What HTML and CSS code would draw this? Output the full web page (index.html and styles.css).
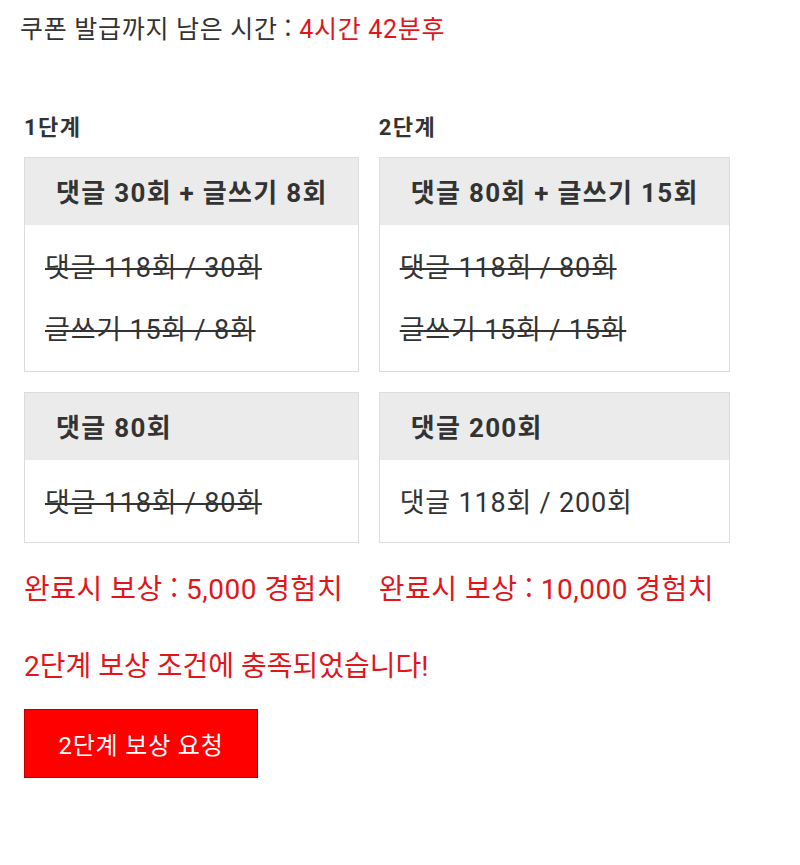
FILE: index.html
```html
<!DOCTYPE html>
<html lang="ko">
<head>
<meta charset="utf-8">
<link rel="stylesheet" href="styles.css">
</head>
<body>
<div class="page">
  <p class="timer">쿠폰 발급까지 남은 시간 <span class="colon">:</span> <span class="red">4시간 42분후</span></p>
  <div class="stages">
    <div class="stage">
      <h3 class="stage-title">1단계</h3>
      <div class="card">
        <div class="card-head">댓글 30회 + 글쓰기 8회</div>
        <div class="card-body">
          <p class="line done">댓글 118회 / 30회</p>
          <p class="line done">글쓰기 15회 / 8회</p>
        </div>
      </div>
      <div class="card">
        <div class="card-head">댓글 80회</div>
        <div class="card-body">
          <p class="line done">댓글 118회 / 80회</p>
        </div>
      </div>
      <p class="reward">완료시 보상 <span class="colon">:</span> 5,000 경험치</p>
    </div>
    <div class="stage">
      <h3 class="stage-title">2단계</h3>
      <div class="card">
        <div class="card-head">댓글 80회 + 글쓰기 15회</div>
        <div class="card-body">
          <p class="line done">댓글 118회 / 80회</p>
          <p class="line done">글쓰기 15회 / 15회</p>
        </div>
      </div>
      <div class="card">
        <div class="card-head">댓글 200회</div>
        <div class="card-body">
          <p class="line">댓글 118회 / 200회</p>
        </div>
      </div>
      <p class="reward">완료시 보상 <span class="colon">:</span> 10,000 경험치</p>
    </div>
  </div>
  <p class="notice">2단계 보상 조건에 충족되었습니다!</p>
  <button class="req-btn" type="button">2단계 보상 요청</button>
</div>
</body>
</html>
```
FILE: styles.css
```css
html, body {
  margin: 0;
  padding: 0;
  background: #fff;
}
body {
  font-family: Roboto, "Noto Sans CJK KR", sans-serif;
  color: #333;
}
.page {
  padding: 14px 20px 40px 20px;
}
.colon {
  font-family: "Noto Sans CJK KR", sans-serif;
  line-height: 0;
}
.timer {
  margin: 0;
  font-size: 25px;
  letter-spacing: 0.7px;
  line-height: 32px;
}
.red {
  color: #e0161b;
}
.stages {
  display: flex;
  align-items: flex-start;
  gap: 20px;
  margin: 68px 0 0 4px;
}
.stage {
  display: flex;
  flex-direction: column;
}
.stage-title {
  margin: 0 0 15px 0;
  font-size: 22px;
  letter-spacing: 1.5px;
  line-height: 28px;
  font-weight: bold;
}
.card {
  border: 1px solid #dcdcdc;
  margin-bottom: 20px;
}
.card-head {
  background: #ebebeb;
  height: 67px;
  line-height: 70px;
  padding: 0 30px 0 31px;
  font-size: 26px;
  letter-spacing: 1.3px;
  font-weight: bold;
  white-space: nowrap;
  overflow: hidden;
}
.card-body {
  padding: 12px 20px 10px 20px;
}
.card + .card .card-body {
  padding-bottom: 8px;
}
.line {
  margin: 0;
  font-size: 27px;
  letter-spacing: 0.8px;
  line-height: 62px;
  white-space: nowrap;
}
.done {
  text-decoration: line-through;
  text-decoration-thickness: 2px;
}
.reward {
  margin: 10px 0 0 0;
  font-size: 28px;
  letter-spacing: 0.5px;
  line-height: 34px;
  color: #e0161b;
  white-space: nowrap;
}
.notice {
  margin: 43px 0 0 4px;
  font-size: 28px;
  letter-spacing: 0;
  line-height: 34px;
  color: #e0161b;
}
.req-btn {
  display: block;
  margin: 25px 0 0 4px;
  width: 234px;
  height: 69px;
  background: #ff0000;
  border: 1px solid #b80000;
  color: #fff;
  font-family: Roboto, "Noto Sans CJK KR", sans-serif;
  font-size: 24px;
  letter-spacing: 0.8px;
  padding: 0;
}
```
